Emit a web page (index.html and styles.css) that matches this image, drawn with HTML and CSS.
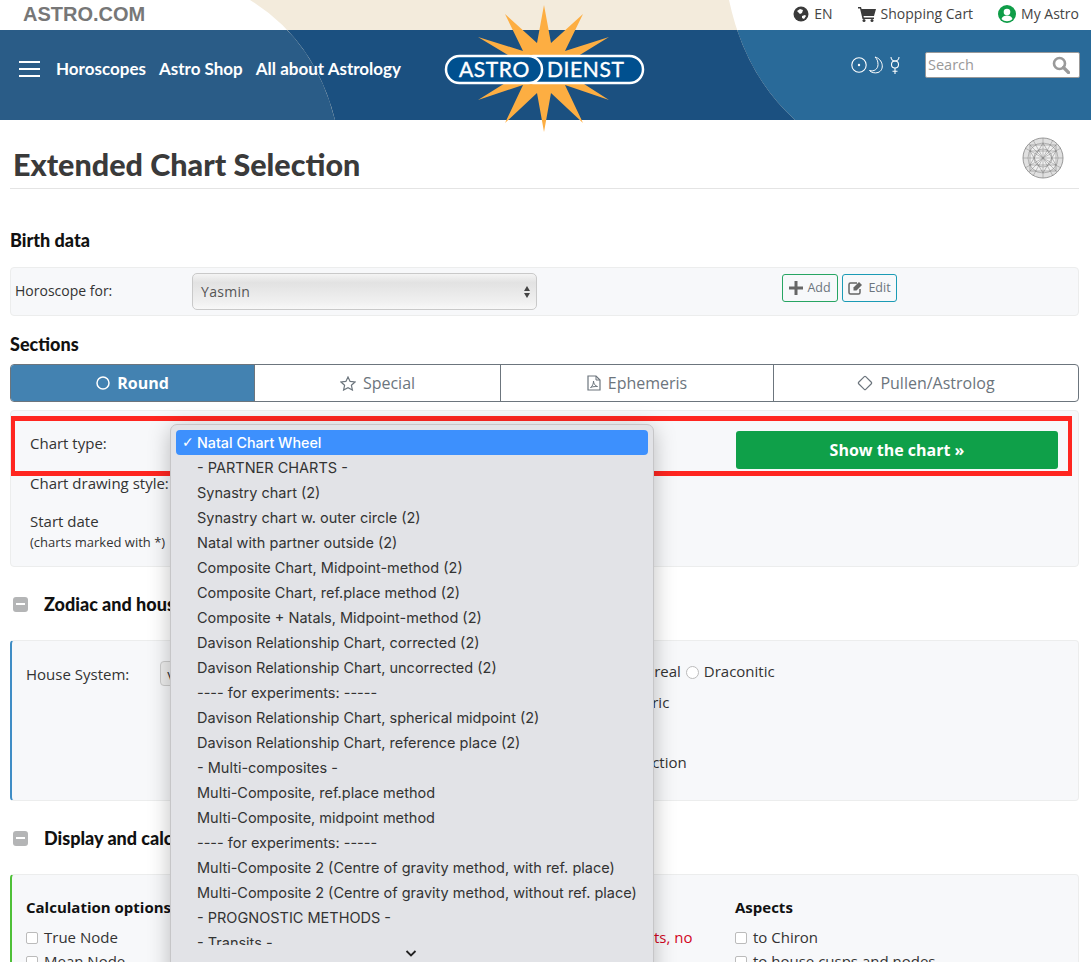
FILE: index.html
```html
<!DOCTYPE html>
<html lang="en">
<head>
    <meta charset="UTF-8">
    <title>Extended Chart Selection</title>
    <link rel="stylesheet" href="styles.css">
</head>
<body>
<div class="page">
    <header class="site-head">
        <svg class="head-bg" width="1091" height="120" viewBox="0 0 1091 120">
            <defs>
                <clipPath id="bandClip"><rect x="0" y="30" width="1091" height="90"/></clipPath>
            </defs>
            <rect x="0" y="30" width="600" height="90" fill="#2a5c87"/>
            <rect x="600" y="30" width="491" height="90" fill="#296a99"/>
            <path d="M250 0 Q315 40 335 120 L795 120 Q745 75 729 0 Z" fill="#f3ebdc"/>
            <path d="M250 0 Q315 40 335 120 L795 120 Q745 75 729 0 Z" fill="#1b5080" clip-path="url(#bandClip)"/>
        </svg>
        <div class="top-bar">
            <a class="brand">ASTRO.COM</a>
            <ul class="top-links">
                <li>
                    <svg width="16" height="16" viewBox="0 0 16 16"><circle cx="8" cy="8" r="7.5" fill="#3a3a3a"/><path d="M4 5l3-2 3 1-1 3-2 1zM9 10l3-1 1 1-2 3-2-1z" fill="#fff"/></svg>
                    EN
                </li>
                <li>
                    <svg width="18" height="16" viewBox="0 0 18 16"><path d="M0 1h3l.6 2H18l-2 7H5.500l.4 1.500H16V13H4.500L2 2.500H0z" fill="#3a3a3a"/><circle cx="6" cy="14.500" r="1.500" fill="#3a3a3a"/><circle cx="14" cy="14.500" r="1.500" fill="#3a3a3a"/></svg>
                    Shopping Cart
                </li>
                <li>
                    <svg width="18" height="18" viewBox="0 0 18 18"><circle cx="9" cy="9" r="9" fill="#0f9d48"/><circle cx="9" cy="7" r="3.300" fill="#fff"/><path d="M3.500 14c1-3 3-3.500 5.500-3.500s4.500.5 5.500 3.500c-1.500 1.500-3.500 2.200-5.500 2.200s-4-.7-5.500-2.200z" fill="#fff"/></svg>
                    My Astro
                </li>
            </ul>
        </div>
        <div class="main-nav">
            <div class="burger"><span></span><span></span><span></span></div>
            <a>Horoscopes</a>
            <a>Astro Shop</a>
            <a>All about Astrology</a>
            <div class="nav-right">
                <svg width="50" height="18" viewBox="0 0 50 18">
                    <circle cx="8" cy="9" r="7.200" fill="none" stroke="#fff" stroke-width="1.100"/>
                    <circle cx="8" cy="9" r="1.200" fill="#fff"/>
                    <path d="M24 1C32 3 34 14 27 16.500C24 17.500 20 16.500 18.500 14.500C23 16 27 13 27 8.500C27 5 26 3 24 1Z" fill="none" stroke="#fff" stroke-width="1"/>
                    <circle cx="44" cy="8.500" r="3.500" fill="none" stroke="#fff" stroke-width="1.100"/>
                    <path d="M40 1a4 4 0 0 0 8 0M44 12v6M41.500 15.200h5" fill="none" stroke="#fff" stroke-width="1.100"/>
                </svg>
                <div class="search-box">
                    <span>Search</span>
                    <svg width="18" height="18" viewBox="0 0 18 18"><circle cx="7.500" cy="7.500" r="5.500" fill="none" stroke="#9a9a9a" stroke-width="2.600"/><path d="M11.500 11.500l5 5" stroke="#9a9a9a" stroke-width="3.200" stroke-linecap="round"/></svg>
                </div>
            </div>
        </div>
        <svg class="logo" width="210" height="130" viewBox="0 0 210 130">
            <polygon fill="#fdae42" points="100,0 107,38 139,9 121,46 165,32 126,56 170,63 126,70 165,95 121,80 139,118 107,88 100,127 93,88 61,118 79,80 34,95 74,70 29,63 74,56 34,32 79,46 61,9 93,38"/>
            <rect x="76" y="51" width="123" height="27" rx="13.500" fill="#00508f" stroke="#fff" stroke-width="2.500"/>
            <rect x="2" y="51" width="96" height="27" rx="13.500" fill="#00508f" stroke="#fff" stroke-width="2.500"/>
            <text x="15" y="72" class="logo-text">ASTRO</text>
            <text x="103" y="72" class="logo-text">DIENST</text>
        </svg>
    </header>

    <main class="content">
        <div class="page-title">
            <h1>Extended Chart Selection</h1>
            <svg class="wheel" width="42" height="42" viewBox="0 0 42 42">
                <circle cx="21" cy="21" r="20" fill="#e0e0e0" stroke="#999" stroke-width="1"/>
                <circle cx="21" cy="21" r="15" fill="#f0f0f0" stroke="#888" stroke-width=".6"/>
                <circle cx="21" cy="21" r="9" fill="none" stroke="#888" stroke-width=".6"/>
                <path d="M21 1v40M1 21h40M7 7l28 28M35 7L7 35M11 3l20 36M31 3L11 39M3 11l36 20M39 11L3 31" stroke="#888" stroke-width=".5"/>
                <path d="M21 6L34 28H8zM21 36L8 14h26zM8 8h26v26H8z" fill="none" stroke="#777" stroke-width=".5"/>
            </svg>
        </div>

        <h2 class="sec-title first">Birth data</h2>
        <div class="panel birth-panel">
            <label class="birth-label">Horoscope for:</label>
            <div class="fake-select">Yasmin<span class="arrows"><i></i><i></i></span></div>
            <div class="birth-btns">
                <button class="mini add" type="button">
                    <svg width="14" height="14" viewBox="0 0 14 14"><path d="M5.500 0h3v5.500H14v3H8.500V14h-3V8.500H0v-3h5.500z" fill="#666"/></svg>Add</button>
                <button class="mini edit" type="button">
                    <svg width="16" height="14" viewBox="0 0 16 14"><path d="M12 8v3.500a1.500 1.500 0 0 1-1.500 1.500h-8A1.500 1.500 0 0 1 1 11.500v-8A1.500 1.500 0 0 1 2.500 2H9" fill="none" stroke="#666" stroke-width="1.500"/><path d="M5.500 6.500L11 1l3 3-5.500 5.500H5.500z" fill="#666"/></svg>Edit</button>
            </div>
        </div>

        <h2 class="sec-title">Sections</h2>
        <div class="tabs">
            <div class="tab active tab-round">
                <svg width="14" height="14" viewBox="0 0 14 14"><circle cx="7" cy="7" r="6" fill="none" stroke="#fff" stroke-width="1.500"/></svg>Round</div>
            <div class="tab tab-special">
                <svg width="16" height="15" viewBox="0 0 16 15"><path d="M8 1l2.100 4.400 4.900.6-3.600 3.300 1 4.700L8 11.600 3.600 14l1-4.700L1 6l4.900-.6z" fill="none" stroke="#6c757d" stroke-width="1.200"/></svg>Special</div>
            <div class="tab tab-eph">
                <svg width="14" height="16" viewBox="0 0 14 16"><path d="M1 1h8l4 4v10H1z" fill="none" stroke="#6c757d" stroke-width="1.200"/><path d="M9 1v4h4M3.500 12.500c2-1 3-4 3-6.500 0 3 2 5 4 5.500-2 0-5 0-7 1z" fill="none" stroke="#6c757d"/></svg>Ephemeris</div>
            <div class="tab tab-pullen">
                <svg width="16" height="16" viewBox="0 0 16 16"><rect x="3" y="3" width="10" height="10" rx="1" transform="rotate(45 8 8)" fill="none" stroke="#6c757d" stroke-width="1.200"/></svg>Pullen/Astrolog</div>
        </div>

        <section class="panel chart-panel">
            <div class="chart-row first-row">
                <label>Chart type:</label>
                <button class="show-btn" type="button">Show the chart »</button>
            </div>
            <div class="chart-row style-row"><label>Chart drawing style:</label></div>
            <div class="chart-row date-row">
                <label>Start date<small>(charts marked with *)</small></label>
            </div>

            <div class="red-frame"></div>

            <div class="menu">
                <ul class="menu-list">
                    <li class="picked"><span class="tick">✓</span>Natal Chart Wheel</li>
                    <li>- PARTNER CHARTS -</li>
                    <li>Synastry chart (2)</li>
                    <li>Synastry chart w. outer circle (2)</li>
                    <li>Natal with partner outside (2)</li>
                    <li>Composite Chart, Midpoint-method (2)</li>
                    <li>Composite Chart, ref.place method (2)</li>
                    <li>Composite + Natals, Midpoint-method (2)</li>
                    <li>Davison Relationship Chart, corrected (2)</li>
                    <li>Davison Relationship Chart, uncorrected (2)</li>
                    <li>---- for experiments: -----</li>
                    <li>Davison Relationship Chart, spherical midpoint (2)</li>
                    <li>Davison Relationship Chart, reference place (2)</li>
                    <li>- Multi-composites -</li>
                    <li>Multi-Composite, ref.place method</li>
                    <li>Multi-Composite, midpoint method</li>
                    <li>---- for experiments: -----</li>
                    <li>Multi-Composite 2 (Centre of gravity method, with ref. place)</li>
                    <li>Multi-Composite 2 (Centre of gravity method, without ref. place)</li>
                    <li>- PROGNOSTIC METHODS -</li>
                    <li>- Transits -</li>
                </ul>
                <svg class="menu-more" width="12" height="7" viewBox="0 0 12 7"><path d="M1.500 1l4.500 4.500L10.500 1" fill="none" stroke="#222" stroke-width="1.800"/></svg>
            </div>
        </section>

        <h2 class="fold-title"><span class="fold"></span>Zodiac and houses</h2>
        <section class="panel zodiac-panel">
            <div class="house-left">
                <label>House System:</label>
                <div class="small-select">v</div>
            </div>
            <div class="house-right">
                <p class="opt-a"><i class="radio"></i>Tropical <i class="radio"></i>Sidereal <i class="radio"></i>Draconitic</p>
                <p class="opt-b">Heliocentric</p>
                <p class="opt-c">Draconic direction</p>
            </div>
        </section>

        <h2 class="fold-title"><span class="fold"></span>Display and calculation</h2>
        <section class="panel calc-panel">
            <div class="calc-col">
                <h3>Calculation options</h3>
                <p><i class="check"></i>True Node</p>
                <p><i class="check"></i>Mean Node</p>
            </div>
            <div class="calc-col warn-col">
                <p class="warn">Only planets, no</p>
            </div>
            <div class="calc-col">
                <h3>Aspects</h3>
                <p><i class="check"></i>to Chiron</p>
                <p><i class="check"></i>to house cusps and nodes</p>
            </div>
        </section>
    </main>
</div>
</body>
</html>
```

FILE: styles.css
```css
html, body {
  margin: 0;
  padding: 0;
  background: #fff;
}
.page {
  position: relative;
  height: 962px;
  overflow: hidden;
  font-family: "Open Sans", "Noto Sans", sans-serif;
  font-size: 15px;
  line-height: 20px;
  color: #333;
}
.site-head {
  position: relative;
  height: 120px;
}
.head-bg {
  position: absolute;
  top: 0;
  left: 0;
}
.logo {
  position: absolute;
  top: 5px;
  left: 444px;
}
.logo-text {
  font-family: Lato, sans-serif;
  font-size: 21px;
  letter-spacing: 0.6px;
  fill: #fff;
  stroke: #fff;
  stroke-width: 0.4px;
}
.top-bar {
  position: relative;
  height: 30px;
  display: flex;
  align-items: center;
  justify-content: space-between;
  padding: 0 12px 3px 23px;
  box-sizing: border-box;
}
.brand {
  font-family: "Liberation Sans", Arial, sans-serif;
  font-weight: bold;
  font-size: 20px;
  color: #777;
}
.top-links {
  display: flex;
  gap: 25px;
  list-style: none;
  margin: 0;
  padding: 0;
  font-size: 14px;
  color: #444;
}
.top-links li {
  display: flex;
  align-items: center;
  gap: 5px;
}
.main-nav {
  position: relative;
  height: 90px;
  display: flex;
  align-items: center;
  gap: 13px;
  padding: 0 11px 13px 19px;
  box-sizing: border-box;
  font-family: Lato, sans-serif;
  font-weight: 700;
  font-size: 17px;
  color: #fff;
}
.burger {
  width: 21px;
  margin-right: 3px;
}
.burger span {
  display: block;
  height: 2px;
  background: #fff;
  margin: 5px 0;
}
.nav-right {
  margin: 0 0 7px auto;
  display: flex;
  align-items: center;
  gap: 24px;
}
.search-box {
  width: 155px;
  height: 26px;
  box-sizing: border-box;
  display: flex;
  align-items: center;
  justify-content: space-between;
  padding: 0 9px 0 2px;
  background: #fff;
  border: 1px solid #999;
  border-radius: 2px;
  font-family: "Open Sans", sans-serif;
  font-weight: normal;
  font-size: 14.500px;
  color: #999;
}

.content {
  padding: 0 12px 0 10px;
}
.page-title {
  display: flex;
  align-items: center;
  justify-content: space-between;
  height: 68px;
  padding: 0 15px 0 3px;
  border-bottom: 1px solid #e4e4e4;
}
.page-title h1 {
  margin: 20px 0 0;
  font-family: Lato, sans-serif;
  font-size: 30.500px;
  line-height: 36px;
  font-weight: 900;
  color: #3a3a3a;
}
.wheel {
  margin-top: 8px;
}
.sec-title {
  margin: 0;
  height: 26px;
  font-family: Lato, sans-serif;
  font-size: 18px;
  font-weight: 900;
  color: #111;
  padding-top: 17px;
  line-height: 22px;
}
.sec-title.first {
  padding-top: 40px;
}
.panel {
  position: relative;
  box-sizing: border-box;
  background: #f7f8fa;
  border: 1px solid #eceded;
  border-radius: 4px;
}
.birth-panel {
  height: 49px;
  display: flex;
  align-items: center;
  margin-top: 12px;
  padding-left: 4px;
}
.birth-label {
  width: 177px;
  margin-top: -2px;
  font-size: 14px;
}
.fake-select {
  position: relative;
  width: 345px;
  height: 37px;
  line-height: 36px;
  box-sizing: border-box;
  padding-left: 8px;
  border: 1px solid #c9c9c9;
  border-radius: 5px;
  background: linear-gradient(#f4f4f4, #e2e2e2 25%, #f0f0f0 80%, #f8f8f8);
  font-size: 14px;
  letter-spacing: 0.3px;
  color: #555;
}
.arrows {
  position: absolute;
  right: 6px;
  top: 12px;
}
.arrows i {
  display: block;
  width: 0;
  height: 0;
  border-left: 3.500px solid transparent;
  border-right: 3.500px solid transparent;
  margin-bottom: 2px;
}
.arrows i:first-child {
  border-bottom: 5px solid #444;
}
.arrows i:last-child {
  border-top: 5px solid #444;
}
.birth-btns {
  display: flex;
  gap: 4px;
  margin: -8px 0 0 245px;
}
.mini {
  display: flex;
  align-items: center;
  justify-content: center;
  gap: 4px;
  height: 28px;
  padding: 0;
  background: none;
  border-radius: 3px;
  font-family: "Open Sans", sans-serif;
  font-size: 12.500px;
  color: #6c757d;
}
.mini.add {
  width: 56px;
  border: 1px solid #27a563;
}
.mini.edit {
  width: 55px;
  border: 1px solid #1b9bb5;
}

.tabs {
  display: flex;
  height: 38px;
  margin-top: 5px;
  border: 1px solid #6c757d;
  border-radius: 4px;
  box-sizing: border-box;
  overflow: hidden;
  font-size: 16px;
  color: #6c757d;
}
.tab {
  display: flex;
  align-items: center;
  justify-content: center;
  gap: 7px;
  box-sizing: border-box;
  border-left: 1px solid #6c757d;
}
.tab.active {
  background: #4382b1;
  color: #fff;
  font-weight: 700;
  border-left: none;
}
.tab-round { width: 243px; }
.tab-special { width: 246px; }
.tab-eph { width: 273px; }
.tab-pullen { flex: 1; }

.chart-panel {
  z-index: 2;
  height: 157px;
  margin-top: 8px;
  padding: 20px 20px 0 19px;
}
.chart-row {
  display: flex;
  align-items: flex-start;
  justify-content: space-between;
}
.first-row {
  height: 38px;
}
.first-row label {
  margin-top: 2px;
}
.style-row {
  height: 28px;
  align-items: center;
}
.date-row {
  padding-top: 14px;
}
.date-row small {
  display: block;
  font-size: 13px;
  line-height: 18px;
  margin-top: 2px;
}
.show-btn {
  width: 322px;
  height: 38px;
  background: #0fa049;
  border: none;
  border-radius: 3px;
  font-family: "Open Sans", sans-serif;
  font-weight: 700;
  font-size: 16px;
  color: #fff;
}
.red-frame {
  position: absolute;
  top: 5px;
  left: 0;
  width: 1061px;
  height: 60px;
  box-sizing: border-box;
  border: solid #ff2620;
  border-width: 5px 4px;
}
.menu {
  position: absolute;
  top: 13px;
  left: 159px;
  width: 484px;
  height: 560px;
  box-sizing: border-box;
  padding: 5px 5px 0;
  background: #e2e3e7;
  border: 1px solid #c6c6c8;
  border-radius: 7px;
  box-shadow: 0 4px 22px rgba(0, 0, 0, 0.25);
  font-family: Inter, sans-serif;
  font-size: 14.500px;
  color: #333;
}
.menu-list {
  list-style: none;
  margin: 0;
  padding: 0;
  height: 515px;
  overflow: hidden;
}
.menu-list li {
  position: relative;
  height: 25px;
  line-height: 25px;
  padding-left: 21px;
  white-space: nowrap;
}
.menu-list .picked {
  background: #3d90fd;
  border-radius: 4px;
  color: #fff;
  font-size: 14.300px;
  font-weight: 500;
}
.tick {
  position: absolute;
  left: 6px;
  font-family: "DejaVu Sans", sans-serif;
  font-size: 14px;
  font-weight: bold;
}
.menu-more {
  position: absolute;
  left: 234px;
  top: 525px;
}

.fold-title {
  display: flex;
  align-items: center;
  margin: 0;
  padding: 26px 0 0 3px;
  height: 22px;
  font-family: Lato, sans-serif;
  font-size: 18px;
  font-weight: 900;
  color: #111;
}
.fold {
  position: relative;
  width: 15px;
  height: 15px;
  margin-right: 16px;
  border-radius: 3px;
  background: #b4b5b6;
}
.fold:after {
  content: '';
  position: absolute;
  top: 6px;
  left: 3px;
  width: 9px;
  height: 2.500px;
  background: #fff;
}
.zodiac-panel {
  height: 161px;
  margin-top: 25px;
  border-left: 2px solid #3f8dc5;
  display: grid;
  grid-template-columns: 515px 1fr;
}
.house-left {
  display: flex;
  align-items: center;
  height: 25px;
  margin: 20px 0 0 14px;
  gap: 31px;
}
.small-select {
  width: 30px;
  height: 25px;
  line-height: 25px;
  padding-left: 6px;
  box-sizing: border-box;
  border: 1px solid #ccc;
  border-radius: 4px;
  background: #eee;
}
.house-right p {
  margin: 0;
  white-space: nowrap;
}
.opt-a {
  padding: 20px 0 0 0;
}
.opt-b {
  padding: 11px 0 0 59px;
}
.opt-c {
  padding: 40px 0 0 32px;
}
.radio {
  display: inline-block;
  width: 11px;
  height: 11px;
  border: 1px solid #bbb;
  border-radius: 50%;
  background: #fff;
  margin: 0 5px 0 1px;
  vertical-align: -2px;
}
.calc-panel {
  height: 200px;
  margin-top: 25px;
  border-left: 2px solid #4fc038;
  display: grid;
  grid-template-columns: 375px 334px 1fr;
  padding: 22px 0 0 14px;
}
.warn-col {
  padding-top: 30px;
}
.calc-col p.warn {
  margin: 0 0 0 178px;
  color: #d2061e;
}
.calc-col h3 {
  margin: 0 0 10px;
  font-family: "Open Sans", sans-serif;
  font-size: 15px;
  font-weight: 700;
  color: #111;
}
.calc-col p {
  margin: 0 0 4px;
  white-space: nowrap;
}
.check {
  display: inline-block;
  width: 10px;
  height: 10px;
  margin-right: 6px;
  border: 1px solid #bbb;
  border-radius: 2px;
  background: #fff;
  vertical-align: -1px;
}
```
